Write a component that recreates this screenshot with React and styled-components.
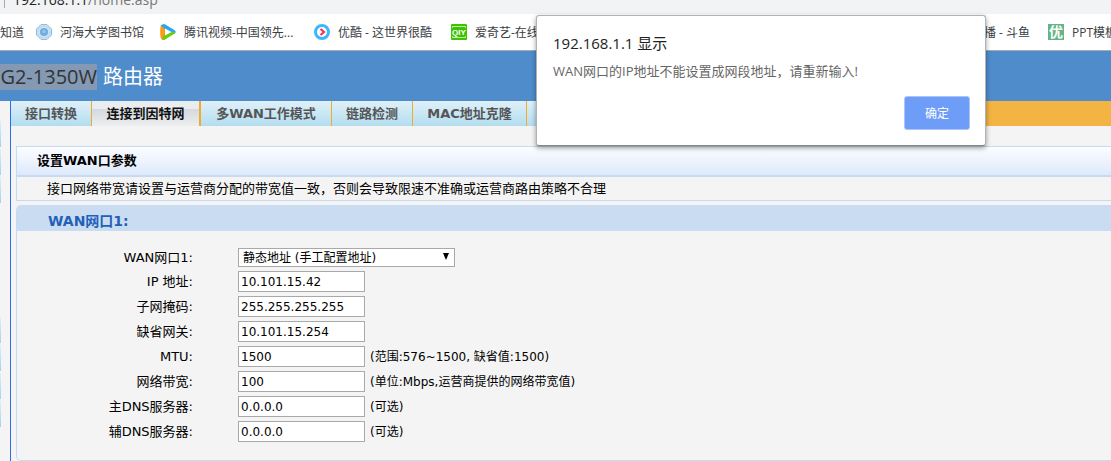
import React from 'react'
import styled, { createGlobalStyle } from 'styled-components'

const uiFont = `"Open Sans", "Noto Sans CJK SC", sans-serif`;
const pageFont = `"DejaVu Sans", "Noto Sans CJK SC", sans-serif`;

const GlobalStyle = createGlobalStyle`
*{
    box-sizing:border-box;
}
body{
    margin:0;
    background-color:#f4f4f4;
    font-family:${pageFont};
    overflow:hidden;
}
`;

const Page = styled.div`
display:flex;
flex-direction:column;
min-height:100vh;
`;

const AddressBar = styled.div`
display:flex;
align-items:flex-end;
height:14px;
padding-left:4px;
overflow:hidden;
background-color:#f1f3f4;
font-family:${uiFont};
font-size:14px;
line-height:28px;
color:#777;
b{
    font-weight:normal;
    color:#222;
}
`;

const AddressDivider = styled.span`
width:1px;
height:8px;
margin:0 8px 6px 0;
background-color:#aaa;
`;

const Bookmarks = styled.nav`
display:flex;
align-items:center;
height:37px;
overflow:hidden;
background-color:#fff;
border-bottom:1px solid #aaa;
`;

const Bookmark = styled.a`
display:flex;
align-items:center;
flex:none;
gap:8px;
width:${props => props.$width}px;
color:#3c4043;
font-family:${uiFont};
font-size:12px;
line-height:16px;
text-decoration:none;
white-space:nowrap;
svg{
    flex:none;
}
span{
    padding-top:2px;
}
`;

const Header = styled.header`
display:flex;
align-items:center;
gap:6px;
height:50px;
padding-top:2px;
background-color:#4f8ccb;
color:#fff;
font-family:${uiFont};
font-size:20px;
line-height:26px;
white-space:nowrap;
`;

const Model = styled.span`
display:flex;
justify-content:flex-end;
width:97px;
overflow:hidden;
background-color:#8499b4;
color:#333;
`;

const Body = styled.div`
display:flex;
flex:1;
`;

const Sidebar = styled.aside`
flex:none;
width:11px;
padding-top:20px;
border-right:1px solid #2a6df0;
`;

const SideItem = styled.div`
width:1px;
height:26px;
margin-bottom:2px;
background:${props => props.$blank ? 'none' : 'linear-gradient(#dceefa, #9fd4f0)'};
`;

const Main = styled.main`
flex:1;
min-width:0;
`;

const Tabs = styled.nav`
display:flex;
height:25px;
background:linear-gradient(176deg, #f0ab24 48%, #f3b443 52%);
`;

const Tab = styled.a`
flex:none;
width:${props => props.$width}px;
border-right:${props => props.$active ? 2 : 1}px solid #f0ab2c;
background:${props => props.$active
        ? 'linear-gradient(#e9edf0 30%, #d5dade 34%, #eceeef)'
        : 'linear-gradient(#dff0f9, #b3ddef)'};
color:${props => props.$active ? '#111' : '#555'};
font-size:13px;
font-weight:bold;
line-height:25px;
text-align:center;
text-decoration:none;
white-space:nowrap;
`;

const Content = styled.div`
padding:20px 0 0 5px;
`;

const Intro = styled.section`
margin-bottom:4px;
border:1px solid #c6dbf2;
border-right:0;
`;

const IntroTitle = styled.h1`
margin:0;
padding-left:20px;
border-bottom:2px solid #c6dbf2;
background:linear-gradient(#fbfdff, #edf3fe 50%, #dde9fa);
font-size:13px;
line-height:28px;
`;

const IntroText = styled.p`
margin:0;
padding-left:30px;
font-size:13px;
line-height:23px;
white-space:nowrap;
`;

const Panel = styled.section`
border:1px solid #c6dbf2;
border-width:0 0 1px 1px;
border-radius:5px 0 0 5px;
overflow:hidden;
`;

const PanelTitle = styled.h2`
margin:0;
padding:6px 0 0 31px;
background-color:#cadcf2;
color:#2260b8;
font-size:14px;
line-height:20px;
`;

const Form = styled.form`
display:grid;
gap:4px;
padding:17px 0 18px;
`;

const Row = styled.div`
display:grid;
grid-template-columns:176px 217px 1fr;
column-gap:45px;
align-items:center;
`;

const Label = styled.label`
font-size:13px;
line-height:19px;
text-align:right;
`;

const Field = styled.div`
display:flex;
align-items:center;
gap:5px;
font-size:12px;
line-height:20px;
white-space:nowrap;
`;

const TextInput = styled.input`
flex:none;
width:127px;
height:21px;
padding:0 2px;
border:1px solid #a9a9a9;
background-color:#fff;
color:#000;
font-family:${pageFont};
font-size:12px;
`;

const SelectBox = styled.div`
display:grid;
align-items:center;
height:19px;
select, svg{
    grid-area:1 / 1;
}
svg{
    justify-self:end;
    margin:0 5px 2px 0;
    pointer-events:none;
}
`;

const Select = styled.select`
appearance:none;
width:100%;
height:19px;
padding:2px 4px 0;
border:1px solid #a9a9a9;
border-radius:0;
background-color:#fff;
color:#000;
font-family:${pageFont};
font-size:12px;
line-height:15px;
`;

const Dialog = styled.div`
position:absolute;
top:15px;
right:125px;
display:flex;
flex-direction:column;
width:450px;
height:131px;
padding:16px 15px 15px 16px;
border:1px solid #b0b3b6;
border-bottom-color:#888;
border-radius:3px;
background-color:#fff;
box-shadow:0 2px 5px rgba(0,0,0,.4);
font-family:${uiFont};
`;

const DialogTitle = styled.h3`
margin:0;
color:#222;
font-size:15px;
font-weight:normal;
line-height:22px;
`;

const DialogText = styled.p`
margin:7px 0 0;
color:#666;
font-size:13px;
line-height:20px;
white-space:nowrap;
`;

const OkButton = styled.button`
align-self:flex-end;
width:66px;
height:34px;
margin-top:auto;
border:1px solid #a9c5fb;
border-radius:3px;
background-color:#6e9df8;
color:#fff;
font-family:${uiFont};
font-size:12px;
`;

function LibraryIcon() {
    return (
        <svg width="16" height="16" viewBox="0 0 16 16">
            <path d="M5 .5h6L15.500 5v6L11 15.500H5L.5 11V5z" fill="#cfe4f5" stroke="#8fbfe3" />
            <circle cx="8" cy="8" r="6" fill="none" stroke="#a5cdeb" strokeDasharray="2 1" />
            <circle cx="8" cy="8" r="4" fill="#6fabdc" />
            <circle cx="8" cy="7.500" r="2" fill="#92c2e8" />
        </svg>
    )
}

function TencentIcon() {
    return (
        <svg width="16" height="16" viewBox="0 0 16 16">
            <path d="M.5 2Q1.500-.5 5 .5l9 5.500q3 2 0 4L8 8z" fill="#29a8f0" />
            <path d="M.8 1.500Q-.5 8 .8 14q1 3 4.200 1.500L8 8z" fill="#ff9a12" />
            <path d="M2 15.300q1 .8 3 .2l9-5.500q1.500-1 1.500-2L6 7z" fill="#6bcb16" />
            <path d="M5 .5l9 5.500q1.500 1 1.500 2H9L3 .3q1 0 2 .2z" fill="#29a8f0" />
            <path d="M5 4.500v7L11.500 8z" fill="#fff" />
        </svg>
    )
}

function YoukuIcon() {
    return (
        <svg width="16" height="16" viewBox="0 0 16 16">
            <circle cx="8" cy="8" r="6.500" fill="#fff" stroke="#3ab8fb" strokeWidth="3" />
            <path d="M6.500 5l3.500 3-3.500 3" fill="none" stroke="#f0325f" strokeWidth="2.200" />
        </svg>
    )
}

function IqiyiIcon() {
    return (
        <svg width="16" height="16" viewBox="0 0 16 16">
            <rect width="16" height="16" rx="1" fill="#3ec204" />
            <path d="M1.500 4V2.500h13V4M1.500 12v1.500h13V12" fill="none" stroke="#b9f09c" />
            <text x="8" y="11" fill="#fff" fontFamily="Liberation Sans" fontSize="8" fontWeight="bold" textAnchor="middle">QIY</text>
        </svg>
    )
}

function PptIcon() {
    return (
        <svg width="16" height="16" viewBox="0 0 16 16">
            <rect width="16" height="16" fill="#66b386" />
            <text x="8" y="13" fill="#fff" fontFamily="Noto Sans CJK SC" fontSize="14" fontWeight="bold" textAnchor="middle">优</text>
        </svg>
    )
}

const bookmarks = [
    { title: '知道', width: 36 },
    { title: '河海大学图书馆', icon: <LibraryIcon />, width: 124 },
    { title: '腾讯视频-中国领先...', icon: <TencentIcon />, width: 154 },
    { title: '优酷 - 这世界很酷', icon: <YoukuIcon />, width: 137 },
    { title: '爱奇艺-在线视频', icon: <IqiyiIcon />, width: 533 },
    { title: '播 - 斗鱼', width: 64 },
    { title: 'PPT模板', icon: <PptIcon />, width: 80 },
];

const tabs = [
    { title: '接口转换', width: 81 },
    { title: '连接到因特网', width: 109, active: true },
    { title: '多WAN工作模式', width: 131 },
    { title: '链路检测', width: 81 },
    { title: 'MAC地址克隆', width: 114 },
    { title: '运营商', width: 80 },
];

const fields = [
    { id: 'ip', label: 'IP 地址:', value: '10.101.15.42' },
    { id: 'mask', label: '子网掩码:', value: '255.255.255.255' },
    { id: 'gateway', label: '缺省网关:', value: '10.101.15.254' },
    { id: 'mtu', label: 'MTU:', value: '1500', hint: '(范围:576~1500, 缺省值:1500)' },
    { id: 'bandwidth', label: '网络带宽:', value: '100', hint: '(单位:Mbps,运营商提供的网络带宽值)' },
    { id: 'dns1', label: '主DNS服务器:', value: '0.0.0.0', hint: '(可选)' },
    { id: 'dns2', label: '辅DNS服务器:', value: '0.0.0.0', hint: '(可选)' },
];

const sideItems = [0, 0, 0, 1, 1, 1, 1, 0, 0, 0, 0];

export default function App() {
    return (
        <Page>
            <GlobalStyle />
            <AddressBar>
                <AddressDivider />
                <span><b>192.168.1.1</b>/home.asp</span>
            </AddressBar>
            <Bookmarks>
                {bookmarks.map(item => (
                    <Bookmark key={item.title} href="#" $width={item.width}>
                        {item.icon}
                        <span>{item.title}</span>
                    </Bookmark>
                ))}
            </Bookmarks>
            <Header>
                <Model>G2-1350W</Model>
                路由器
            </Header>
            <Body>
                <Sidebar>
                    {sideItems.map((blank, i) => <SideItem key={i} $blank={blank} />)}
                </Sidebar>
                <Main>
                    <Tabs>
                        {tabs.map(tab => (
                            <Tab key={tab.title} href="#" $width={tab.width} $active={tab.active}>
                                {tab.title}
                            </Tab>
                        ))}
                    </Tabs>
                    <Content>
                        <Intro>
                            <IntroTitle>设置WAN口参数</IntroTitle>
                            <IntroText>接口网络带宽请设置与运营商分配的带宽值一致，否则会导致限速不准确或运营商路由策略不合理</IntroText>
                        </Intro>
                        <Panel>
                            <PanelTitle>WAN网口1:</PanelTitle>
                            <Form>
                                <Row>
                                    <Label htmlFor="mode">WAN网口1:</Label>
                                    <SelectBox>
                                        <Select id="mode">
                                            <option>静态地址 (手工配置地址)</option>
                                        </Select>
                                        <svg width="8" height="7" viewBox="0 0 8 7">
                                            <path d="M1 0h6L4 7z" />
                                        </svg>
                                    </SelectBox>
                                </Row>
                                {fields.map(field => (
                                    <Row key={field.id}>
                                        <Label htmlFor={field.id}>{field.label}</Label>
                                        <Field>
                                            <TextInput id={field.id} defaultValue={field.value} />
                                            {field.hint}
                                        </Field>
                                    </Row>
                                ))}
                            </Form>
                        </Panel>
                    </Content>
                </Main>
            </Body>
            <Dialog role="alertdialog" aria-labelledby="dialog-title">
                <DialogTitle id="dialog-title">192.168.1.1 显示</DialogTitle>
                <DialogText>WAN网口的IP地址不能设置成网段地址，请重新输入!</DialogText>
                <OkButton type="button">确定</OkButton>
            </Dialog>
        </Page>
    )
}
